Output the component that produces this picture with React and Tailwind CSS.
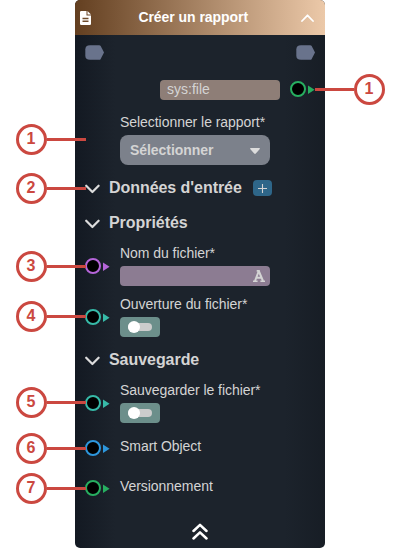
import React from "react";

const Port = ({ color }) => (
  <svg className="block h-4 w-[25px] shrink-0" viewBox="0 0 25 16">
    <circle cx="8" cy="8" r="7" fill="#000" stroke={color} strokeWidth="2" />
    <path d="M18 4.5 24.6 8.7 18 13Z" fill={color} />
  </svg>
);

const Anchor = () => (
  <svg className="block h-[15px] w-[19px]" viewBox="0 0 19 15">
    <path d="M5 0.2H14.2Q15.2 0.2 15.7 1.1L19 7.5 15.7 13.9Q15.2 14.8 14.2 14.8H5Q0.3 14.8 0.3 10.5V4.5Q0.3 0.2 5 0.2Z" fill="#69738c" />
  </svg>
);

const Section = ({ title, children }) => (
  <div className="flex h-6 items-center pl-[9.5px]">
    <svg className="mt-[2px] block h-3 w-[15px]" viewBox="0 0 15 12" fill="none" stroke="#dcdcdc" strokeWidth="2.2" strokeLinecap="round" strokeLinejoin="round">
      <path d="M1.2 2.7 7.4 9 13.6 2.7" />
    </svg>
    <h2 className="ml-[9.5px] text-[16px] leading-6 font-bold tracking-[-0.05px]">{title}</h2>
    {children}
  </div>
);

const Field = ({ label, color, offset, children }) => (
  <div className="flex">
    <div className={`w-[45px] shrink-0 pl-[10px] ${offset}`}>
      {color && <Port color={color} />}
    </div>
    <div>
      <div className="h-5 text-[14px] leading-5 tracking-[-0.05px]">{label}</div>
      {children}
    </div>
  </div>
);

const Toggle = () => (
  <div className="mt-[3px] flex h-5 w-10 items-center rounded-[4px] bg-[#6c8f8b] pl-2">
    <div className="flex h-2 w-6 items-center rounded-full bg-[#cccccc]">
      <div className="size-3 shrink-0 rounded-full bg-white" />
    </div>
  </div>
);

const Callout = ({ n, place, reverse }) => (
  <div className={`absolute flex items-center ${place} ${reverse ? "flex-row-reverse" : ""}`}>
    <div className="flex size-[31px] shrink-0 items-center justify-center rounded-full border-3 border-[#cb4840] bg-white text-[16px] leading-none font-bold text-[#cb4840]">
      {n}
    </div>
    <div className="h-[3px] w-[39px] bg-[#cb4840]" />
  </div>
);

export default function App() {
  return (
    <div className="relative h-[548px] w-[400px] overflow-hidden bg-white font-['Liberation_Sans',Arial,sans-serif] text-[#d4d4d4]">
      <div className="ml-[75px] flex h-[548px] w-[250px] flex-col overflow-hidden rounded-[5px] bg-[linear-gradient(90deg,#131922_0%,#1c232c_16%,#1c232c_84%,#171d25_100%)]">
        <header className="flex h-[35px] shrink-0 items-center bg-[linear-gradient(90deg,#633f20,#ecc9a9)] text-white">
          <svg className="ml-[5px] block h-[14px] w-[11px]" viewBox="0 0 11 14">
            <path d="M1.2 0H6.5V4.5H11V12.8Q11 14 9.8 14H1.2Q0 14 0 12.8V1.2Q0 0 1.2 0Z" fill="#fff" />
            <path d="M7.5 0 11 3.5H7.5Z" fill="#fff" />
            <path d="M2.5 7.5H8.5M2.5 10.3H8.5" stroke="#704c2d" strokeWidth="1.4" />
          </svg>
          <h1 className="flex-1 pr-[5.5px] text-center text-[14px] font-bold tracking-[-0.05px]">Créer un rapport</h1>
          <svg className="mr-[11px] block h-2 w-[13px]" viewBox="0 0 13 8" fill="none" stroke="#fff" strokeWidth="1.8" strokeLinecap="round" strokeLinejoin="round">
            <path d="M1 7 6.5 1.3 12 7" />
          </svg>
        </header>

        <div className="flex justify-between px-[10px] pt-[10px]">
          <Anchor />
          <Anchor />
        </div>

        <div className="mt-5 flex pl-[85px]">
          <div className="h-5 w-[120px] rounded-[4px] bg-[#8e7e77] pl-[7px] text-[14px] leading-[19px]">sys:file</div>
          <div className="ml-[10px] pt-[1px]"><Port color="#27ae60" /></div>
        </div>

        <div className="mt-3">
          <Field label="Selectionner le rapport*" offset="">
            <div className="mt-[3px] flex h-[30px] w-[150px] items-center justify-between rounded-[8px] bg-[#7c818b] pr-[10px] pl-[10px] text-[14px] font-bold tracking-[-0.05px]">
              <span>Sélectionner</span>
              <svg className="mt-[2px] block h-[6px] w-[10px]" viewBox="0 0 10 6"><path d="M.7 0H9.3Q10.4.3 9.6 1.2L5.8 5.6Q5 6.3 4.2 5.6L.4 1.2Q-.4.3.7 0Z" fill="#dcdcdc" /></svg>
            </div>
          </Field>
        </div>

        <div className="mt-[11px]">
          <Section title="Données d'entrée">
            <div className="ml-[11px] flex h-4 w-[19px] items-center justify-center rounded-[4px] bg-[#2e6689]">
              <svg className="block size-[9px]" viewBox="0 0 9 9"><path d="M4.5 0V9M0 4.5H9" stroke="#d4d4d4" strokeWidth="1.1" /></svg>
            </div>
          </Section>
        </div>
        <div className="mt-[11px]"><Section title="Propriétés" /></div>

        <div className="mt-2">
          <Field label="Nom du fichier*" color="#b565d9" offset="pt-[15px]">
            <div className="mt-[3px] flex h-5 w-[150px] items-center justify-end rounded-[4px] bg-[#8c7c92] pr-[5px]">
              <svg className="block h-3 w-3" viewBox="0 0 12 12" fill="none" stroke="#d4d4d4">
                <path d="M2 11 5.8 1 10 11M3.2 7.8H8.8" strokeWidth="2" />
                <path d="M0 11.2H4.6M7.4 11.2H12M3.7.9H6.5" strokeWidth="1.6" />
              </svg>
            </div>
          </Field>
        </div>

        <div className="mt-2">
          <Field label="Ouverture du fichier*" color="#37baa8" offset="pt-[15px]"><Toggle /></Field>
        </div>
        <div className="mt-[11px]"><Section title="Sauvegarde" /></div>
        <div className="mt-2">
          <Field label="Sauvegarder le fichier*" color="#37baa8" offset="pt-[15px]"><Toggle /></Field>
        </div>
        <div className="mt-[13px]">
          <Field label="Smart Object" color="#2d96dc" offset="pt-[4px]" />
        </div>
        <div className="mt-5">
          <Field label="Versionnement" color="#27ae60" offset="pt-[4px]" />
        </div>
        <div className="mt-[27px] flex justify-center">
          <svg className="block h-[17px] w-4" viewBox="0 0 16 17" fill="none" stroke="#fff" strokeWidth="2.5" strokeLinecap="round" strokeLinejoin="round">
            <path d="M1.5 8 8 1.8 14.5 8M1.5 15.5 8 9.3 14.5 15.5" />
          </svg>
        </div>
      </div>

      <Callout n="1" place="left-[15.5px] top-[123.5px]" />
      <Callout n="2" place="left-[15.5px] top-[172.5px]" />
      <Callout n="3" place="left-[15.5px] top-[250.5px]" />
      <Callout n="4" place="left-[15.5px] top-[300.5px]" />
      <Callout n="5" place="left-[15.5px] top-[386.5px]" />
      <Callout n="6" place="left-[15.5px] top-[432.5px]" />
      <Callout n="7" place="left-[15.5px] top-[472.5px]" />
      <Callout n="1" place="left-[314.5px] top-[73.5px]" reverse />
    </div>
  );
}
